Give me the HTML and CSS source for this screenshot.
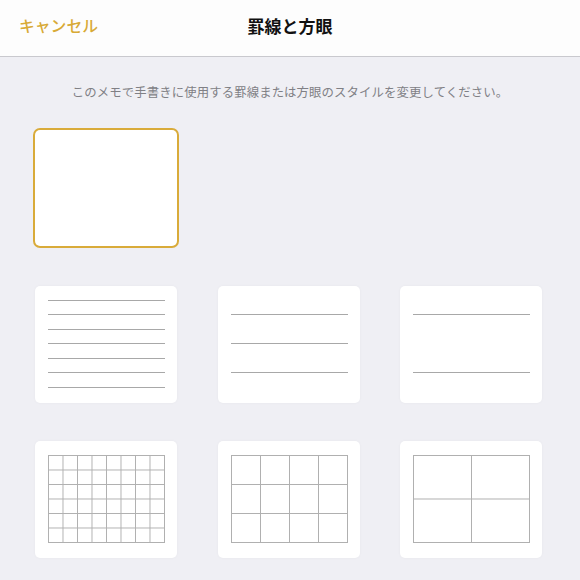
FILE: index.html
```html
<!DOCTYPE html>
<html lang="ja">
<head>
<meta charset="utf-8">
<title>罫線と方眼</title>
<link rel="stylesheet" href="styles.css">
</head>
<body>
<header class="navbar">
  <span class="cancel">キャンセル</span>
  <h1 class="title">罫線と方眼</h1>
</header>
<main class="content">
  <p class="hint">このメモで手書きに使用する罫線または方眼のスタイルを変更してください。</p>
  <div class="options">
    <div class="card selected"></div>
    <div class="spacer"></div>
    <div class="spacer"></div>

    <div class="card">
      <div class="ruled dense">
        <div class="line"></div><div class="line"></div><div class="line"></div><div class="line"></div><div class="line"></div><div class="line"></div><div class="line"></div>
      </div>
    </div>
    <div class="card">
      <div class="ruled medium">
        <div class="line"></div><div class="line"></div><div class="line"></div>
      </div>
    </div>
    <div class="card">
      <div class="ruled medium">
        <div class="line"></div><div class="line"></div>
      </div>
    </div>

    <div class="card">
      <div class="grid small"></div>
    </div>
    <div class="card">
      <div class="grid mid"></div>
    </div>
    <div class="card">
      <div class="grid large"></div>
    </div>
  </div>
</main>
</body>
</html>
```

FILE: styles.css
```css
html, body {
  margin: 0;
  padding: 0;
}
body {
  width: 580px;
  height: 580px;
  overflow: hidden;
  background: #efeff4;
  font-family: "Noto Sans CJK JP", "Noto Sans", sans-serif;
}
.navbar {
  position: relative;
  height: 57px;
  background: #fdfdfd;
  border-bottom: 1px solid #c9c9ce;
  box-sizing: border-box;
  display: flex;
  align-items: center;
  justify-content: center;
}
.cancel {
  position: absolute;
  left: 19px;
  top: 14px;
  font-size: 15.8px;
  line-height: 24px;
  font-weight: 500;
  color: #d8aa36;
}
.title {
  margin: 0 0 4px 0;
  font-size: 17px;
  line-height: 24px;
  font-weight: 700;
  color: #111;
}
.content {
  padding: 0;
}
.hint {
  margin: 26px 0 0 0;
  text-align: center;
  font-size: 12.4px;
  line-height: 18px;
  color: #808085;
  letter-spacing: 0.1px;
}
.options {
  margin-top: 29px;
  padding-left: 35px;
  display: grid;
  grid-template-columns: repeat(3, 142px);
  grid-auto-rows: 117px;
  column-gap: 40.5px;
  row-gap: 38.5px;
}
.card {
  background: #fff;
  border-radius: 5px;
  box-sizing: border-box;
  padding: 14px 12px 0 13px;
  box-shadow: 0 0 3px rgba(0, 0, 0, 0.04);
}
.card.selected {
  height: 116px;
  box-shadow: 0 0 0 2px #d9ab3a;
  border-radius: 5px;
}
.ruled {
  height: 88px;
  display: flex;
  flex-direction: column;
  justify-content: space-between;
  box-sizing: border-box;
}
.ruled.medium {
  padding: 14.5px 0;
}
.line {
  height: 1px;
  background: #a8a8a8;
}
.grid {
  width: 117px;
  height: 88px;
  box-sizing: border-box;
  border-right: 1px solid #b0b0b0;
  border-bottom: 1px solid #b0b0b0;
  background-image:
    linear-gradient(to right, #b0b0b0 1px, transparent 1px),
    linear-gradient(to bottom, #b0b0b0 1px, transparent 1px);
}
.grid.small {
  background-size: 14.5px 14.5px;
}
.grid.mid {
  background-size: 29px 29px;
}
.grid.large {
  background-size: 58px 43.5px;
}
```
